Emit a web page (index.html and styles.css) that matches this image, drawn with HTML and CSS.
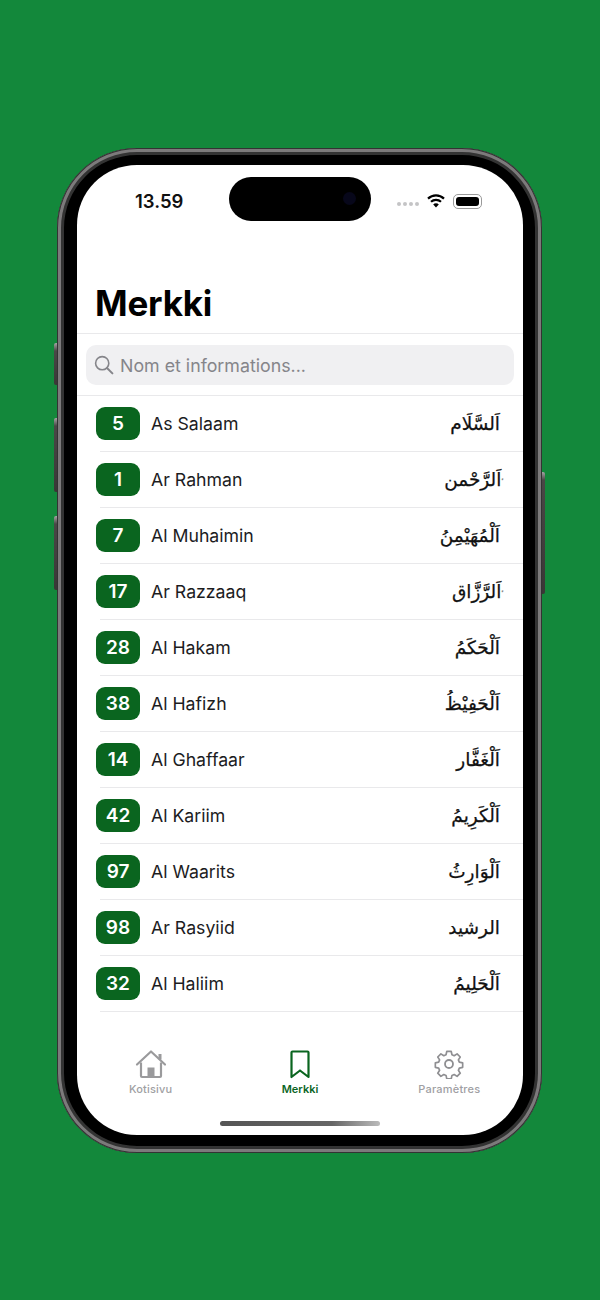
FILE: index.html
```html
<!DOCTYPE html>
<html lang="fi">
<head>
    <meta charset="UTF-8">
    <meta name="viewport" content="width=device-width, initial-scale=1.0">
    <title>Merkki</title>
    <link rel="stylesheet" href="styles.css">
</head>
<body>
    <div class="phone">
        <span class="side-btn btn-mute"></span>
        <span class="side-btn btn-up"></span>
        <span class="side-btn btn-down"></span>
        <span class="side-btn btn-power"></span>
        <div class="screen">
            <div class="island"><span class="camera"></span></div>
            <div class="status">
                <span class="time">13.59</span>
                <div class="status-icons">
                    <span class="signal"><i></i><i></i><i></i><i></i></span>
                    <svg class="wifi" width="18" height="14" viewBox="0 0 18 14">
                        <path d="M1 4.6a11.6 11.6 0 0 1 16 0" fill="none" stroke="#000" stroke-width="2.2"/>
                        <path d="M4 7.8a7.2 7.2 0 0 1 10 0" fill="none" stroke="#000" stroke-width="2.2"/>
                        <path d="M6.2 10.6a3.6 3.6 0 0 1 5.6 0L9 13.6z" fill="#000"/>
                    </svg>
                    <span class="battery"><span class="battery-fill"></span></span>
                </div>
            </div>
            <h1 class="title">Merkki</h1>
            <div class="search-wrap">
                <div class="search">
                    <svg width="20" height="20" viewBox="0 0 20 20">
                        <circle cx="8.2" cy="8.2" r="6.6" fill="none" stroke="#85858a" stroke-width="1.6"/>
                        <path d="M13 13l5.4 5.4" fill="none" stroke="#85858a" stroke-width="2" stroke-linecap="round"/>
                    </svg>
                    <span>Nom et informations...</span>
                </div>
            </div>
            <ul class="list">
                <li class="row"><span class="badge">5</span><span class="name">As Salaam</span><span class="arabic" dir="rtl" lang="ar">اَلسَّلَام</span></li>
                <li class="row"><span class="badge">1</span><span class="name">Ar Rahman</span><span class="arabic" dir="rtl" lang="ar"><span class="tick">ٴ</span>اَلرَّحْمن</span></li>
                <li class="row"><span class="badge">7</span><span class="name">Al Muhaimin</span><span class="arabic" dir="rtl" lang="ar">اَلْمُهَيْمِنُ</span></li>
                <li class="row"><span class="badge">17</span><span class="name">Ar Razzaaq</span><span class="arabic" dir="rtl" lang="ar"><span class="tick">ٴ</span>اَلرَّزَّاق</span></li>
                <li class="row"><span class="badge">28</span><span class="name">Al Hakam</span><span class="arabic" dir="rtl" lang="ar">اَلْحَكَمُ</span></li>
                <li class="row"><span class="badge">38</span><span class="name">Al Hafizh</span><span class="arabic" dir="rtl" lang="ar">اَلْحَفِيْظُ</span></li>
                <li class="row"><span class="badge">14</span><span class="name">Al Ghaffaar</span><span class="arabic" dir="rtl" lang="ar">اَلْغَفَّار</span></li>
                <li class="row"><span class="badge">42</span><span class="name">Al Kariim</span><span class="arabic" dir="rtl" lang="ar">اَلْكَرِيمُ</span></li>
                <li class="row"><span class="badge">97</span><span class="name">Al Waarits</span><span class="arabic" dir="rtl" lang="ar">اَلْوَارِثُ</span></li>
                <li class="row"><span class="badge">98</span><span class="name">Ar Rasyiid</span><span class="arabic" dir="rtl" lang="ar">الرشيد</span></li>
                <li class="row"><span class="badge">32</span><span class="name">Al Haliim</span><span class="arabic" dir="rtl" lang="ar">اَلْحَلِيمُ</span></li>
            </ul>
            <nav class="tabs">
                <div class="tab">
                    <svg width="32" height="30" viewBox="0 0 32 30">
                        <path d="M2 15.500L16 2.500l14 13" fill="none" stroke="#9a9a9c" stroke-width="2.200" stroke-linecap="round" stroke-linejoin="round"/>
                        <path d="M25 5v5.500" fill="none" stroke="#9a9a9c" stroke-width="3"/>
                        <path d="M6 13.500V27a1 1 0 0 0 1 1h18a1 1 0 0 0 1-1V13.500" fill="none" stroke="#9a9a9c" stroke-width="2.200"/>
                        <rect x="12.500" y="18.500" width="7" height="9.500" fill="#9a9a9c"/>
                    </svg>
                    <span>Kotisivu</span>
                </div>
                <div class="tab active">
                    <svg width="32" height="30" viewBox="0 0 32 30">
                        <path d="M8.500 2.500h15a1 1 0 0 1 1 1V28L16 21.500 7.500 28V3.500a1 1 0 0 1 1-1z" fill="none" stroke="#0a651f" stroke-width="2.200" stroke-linejoin="round"/>
                    </svg>
                    <span>Merkki</span>
                </div>
                <div class="tab">
                    <svg width="32" height="30" viewBox="0 0 32 30">
                        <circle cx="16" cy="15" r="4" fill="none" stroke="#8f8f92" stroke-width="1.800"/>
                        <path d="M13.600 2h4.800l.8 3.600 2.400 1 3.100-2 3.400 3.400-2 3.100 1 2.400 3.600.8v4.800l-3.600.8-1 2.400 2 3.100-3.400 3.400-3.100-2-2.400 1-.8 3.600h-4.800l-.8-3.600-2.400-1-3.100 2-3.400-3.400 2-3.100-1-2.400-3.600-.8v-4.800l3.600-.8 1-2.400-2-3.100 3.400-3.400 3.100 2 2.400-1z" transform="translate(16 15) scale(.93) translate(-16 -15.500)" fill="none" stroke="#8f8f92" stroke-width="1.800" stroke-linejoin="round"/>
                    </svg>
                    <span>Paramètres</span>
                </div>
            </nav>
            <div class="home-bar"></div>
        </div>
    </div>
</body>
</html>
```

FILE: styles.css
```css
* {
    box-sizing: border-box;
}
body {
    margin: 0;
    height: 1300px;
    overflow: hidden;
    background-color: #13883b;
    font-family: Inter, "Liberation Sans", sans-serif;
    padding: 148px 0 0 57px;
}
.phone {
    position: relative;
    width: 485px;
    height: 1005px;
    padding: 17px 19px 18px 20px;
    background-color: #000;
    border-radius: 80px;
    box-shadow: inset 0 0 0 1px #333, inset 0 0 0 4px #7c7a7b, inset 0 0 0 7px #333;
}
.side-btn {
    position: absolute;
    width: 3px;
    background: linear-gradient(#a5a5a5 0, #4a4646 8px, #3a3636 100%);
}
.btn-mute { left: -3px; top: 195px; height: 42px; border-radius: 2px 0 0 2px; }
.btn-up { left: -3px; top: 270px; height: 74px; border-radius: 2px 0 0 2px; }
.btn-down { left: -3px; top: 368px; height: 74px; border-radius: 2px 0 0 2px; }
.btn-power { right: -3px; top: 324px; height: 122px; border-radius: 0 2px 2px 0; }
.screen {
    position: relative;
    display: flex;
    flex-direction: column;
    height: 100%;
    background-color: #fff;
    border-radius: 60px;
    overflow: hidden;
}
.island {
    position: absolute;
    left: 152px;
    top: 12px;
    width: 142px;
    height: 44px;
    background-color: #000;
    border-radius: 22px;
}
.camera {
    position: absolute;
    right: 15px;
    top: 15px;
    width: 13px;
    height: 13px;
    border-radius: 50%;
    background-color: #07071a;
}
.status {
    display: flex;
    justify-content: space-between;
    align-items: center;
    height: 72px;
    padding: 0 41px 0 58px;
}
.time {
    font-size: 18.5px;
    font-weight: 600;
    color: #111;
}
.status-icons {
    display: flex;
    align-items: center;
    gap: 8px;
}
.signal {
    display: flex;
    gap: 2px;
    margin-top: 6px;
}
.signal i {
    width: 4px;
    height: 4px;
    border-radius: 50%;
    background-color: #c4c4c6;
}
.battery {
    position: relative;
    width: 29px;
    height: 15px;
    padding: 2px;
    border: 1px solid #9a9a9a;
    border-radius: 5px;
}
.battery-fill {
    display: block;
    height: 100%;
    background-color: #000;
    border-radius: 3px;
}
.title {
    height: 97px;
    margin: 0;
    padding: 44px 0 0 18px;
    font-size: 35px;
    line-height: 44px;
    font-weight: 700;
    letter-spacing: -0.2px;
    color: #000;
    border-bottom: 1px solid #e9e9eb;
}
.search-wrap {
    padding: 11px 9px 10px;
    border-bottom: 1px solid #e9e9eb;
}
.search {
    display: flex;
    align-items: center;
    gap: 6px;
    height: 40px;
    padding-left: 8px;
    background-color: #f0f0f2;
    border-radius: 10px;
    font-size: 17.8px;
    color: #85858a;
}
.list {
    margin: 0;
    padding: 0;
    list-style: none;
}
.row {
    display: flex;
    align-items: center;
    height: 56px;
    padding: 0 23px 2px 19px;
    background-image: linear-gradient(#e9e9eb, #e9e9eb);
    background-size: calc(100% - 23px) 1px;
    background-position: right bottom;
    background-repeat: no-repeat;
}
.badge {
    width: 44px;
    height: 33px;
    margin-right: 11px;
    background-color: #0a651f;
    border-radius: 9px;
    color: #fff;
    font-size: 19px;
    font-weight: 600;
    line-height: 33px;
    text-align: center;
}
.name {
    flex: 1;
    font-size: 17.7px;
    color: #1c1c1e;
}
.arabic {
    font-family: "DejaVu Sans", sans-serif;
    font-size: 18.5px;
    color: #111;
    -webkit-text-stroke: 0.25px #111;
}
.tick {
    font-size: 9px;
    margin-right: -4px;
    color: #555;
    -webkit-text-stroke: 0;
}
.tabs {
    display: grid;
    grid-template-columns: repeat(3, 1fr);
    padding: 37px 0 0;
    margin: 0 -1px;
}
.tab {
    display: flex;
    flex-direction: column;
    align-items: center;
    gap: 3px;
    font-size: 11px;
    font-weight: 500;
    letter-spacing: 0.2px;
    color: #a0a0a3;
}
.tab.active {
    color: #0a651f;
    font-weight: 600;
    letter-spacing: 0;
}
.home-bar {
    position: absolute;
    left: 143px;
    bottom: 9px;
    width: 160px;
    height: 5px;
    border-radius: 3px;
    background: linear-gradient(90deg, #555 0%, #666 70%, #bbb 100%);
}
```
